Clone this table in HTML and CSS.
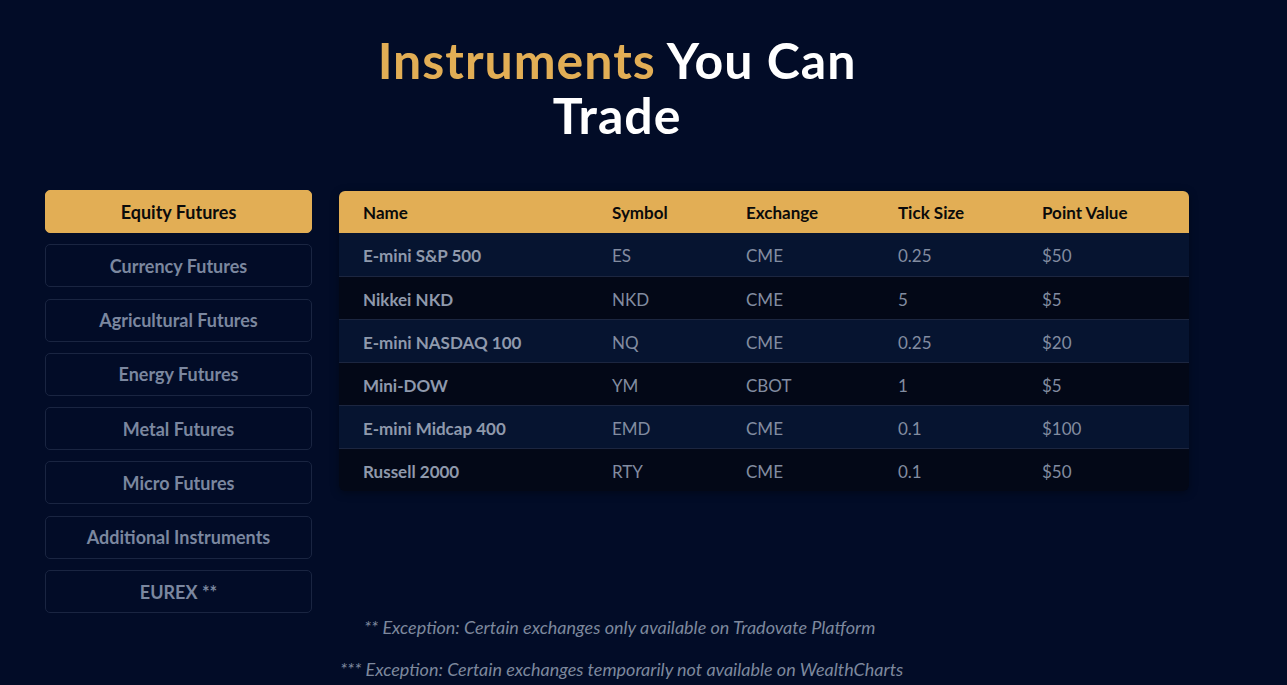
FILE: index.html
```html
<!DOCTYPE html>
<html lang="en">
<head>
<meta charset="utf-8">
<title>Instruments You Can Trade</title>
<link rel="stylesheet" href="styles.css">
</head>
<body>
<section class="instruments">
  <h1 class="title"><span class="accent">Instruments</span> You Can Trade</h1>
  <div class="content">
    <nav class="tabs">
      <button class="tab active">Equity Futures</button>
      <button class="tab">Currency Futures</button>
      <button class="tab">Agricultural Futures</button>
      <button class="tab">Energy Futures</button>
      <button class="tab">Metal Futures</button>
      <button class="tab">Micro Futures</button>
      <button class="tab">Additional Instruments</button>
      <button class="tab">EUREX **</button>
    </nav>
    <div class="table-wrap">
      <table class="grid">
        <thead>
          <tr><th class="c-name">Name</th><th class="c-sym">Symbol</th><th class="c-ex">Exchange</th><th class="c-tick">Tick Size</th><th class="c-pv">Point Value</th></tr>
        </thead>
        <tbody>
          <tr><td class="name">E-mini S&amp;P 500</td><td>ES</td><td>CME</td><td>0.25</td><td>$50</td></tr>
          <tr><td class="name">Nikkei NKD</td><td>NKD</td><td>CME</td><td>5</td><td>$5</td></tr>
          <tr><td class="name">E-mini NASDAQ 100</td><td>NQ</td><td>CME</td><td>0.25</td><td>$20</td></tr>
          <tr><td class="name">Mini-DOW</td><td>YM</td><td>CBOT</td><td>1</td><td>$5</td></tr>
          <tr><td class="name">E-mini Midcap 400</td><td>EMD</td><td>CME</td><td>0.1</td><td>$100</td></tr>
          <tr><td class="name">Russell 2000</td><td>RTY</td><td>CME</td><td>0.1</td><td>$50</td></tr>
        </tbody>
      </table>
    </div>
  </div>
  <div class="notes">
    <p class="note note-indent">** Exception: Certain exchanges only available on Tradovate Platform</p>
    <p class="note">*** Exception: Certain exchanges temporarily not available on WealthCharts</p>
  </div>
</section>
</body>
</html>
```
FILE: styles.css
```css
* { box-sizing: border-box; }
html, body { margin: 0; padding: 0; }
body {
  background: #020c27;
  font-family: Lato, "Liberation Sans", sans-serif;
  color: #8c96aa;
  height: 685px;
  overflow: hidden;
}
.instruments {
  width: 1144px;
  margin-left: 45px;
  padding-top: 33px;
}
.title {
  margin: 0 auto;
  max-width: 540px;
  text-align: center;
  font-size: 50px;
  line-height: 55px;
  letter-spacing: 1px;
  font-weight: 700;
  color: #ffffff;
}
.accent { color: #e2ae55; }
.content {
  display: flex;
  gap: 27px;
  margin-top: 47px;
}
.tabs {
  width: 267px;
  flex: none;
  display: flex;
  flex-direction: column;
  gap: 11.3px;
}
.tab {
  height: 43px;
  border: 1px solid #1a2541;
  border-radius: 5px;
  background: transparent;
  color: #7b879f;
  font-family: inherit;
  font-size: 18px;
  font-weight: 700;
  cursor: pointer;
}
.tab.active {
  background: #e2ae55;
  border-color: #e2ae55;
  color: #0b0b0b;
}
.table-wrap {
  width: 850px;
  margin-top: 1px;
  align-self: flex-start;
  border-radius: 6px;
  overflow: hidden;
  box-shadow: 0 2px 8px rgba(0,0,0,0.35);
}
.grid {
  width: 100%;
  border-collapse: collapse;
  font-size: 17px;
}
.grid th {
  background: #e2ae55;
  color: #0b0b0b;
  font-weight: 700;
  text-align: left;
  height: 42px;
  padding: 0 0 0 24px;
}
.grid td {
  height: 43px;
  padding: 3px 0 0 24px;
  color: #828ca0;
  border-top: 1px solid #1c2640;
}
.grid tbody tr:first-child td { border-top: none; }
.grid tbody tr:nth-child(odd) td { background: #061430; }
.grid tbody tr:nth-child(even) td { background: #030817; }
.grid td.name { font-weight: 700; color: #8f99ac; }
.c-name { width: 249px; }
.c-sym { width: 134px; }
.c-ex { width: 152px; }
.c-tick { width: 144px; }
.c-pv { width: 171px; }
.notes { margin-top: -7px; }
.note {
  margin: 0;
  font-style: italic;
  font-size: 18px;
  line-height: 42px;
  color: #7d889d;
  padding-left: 295px;
}
.note-indent { padding-left: 319px; }
```
